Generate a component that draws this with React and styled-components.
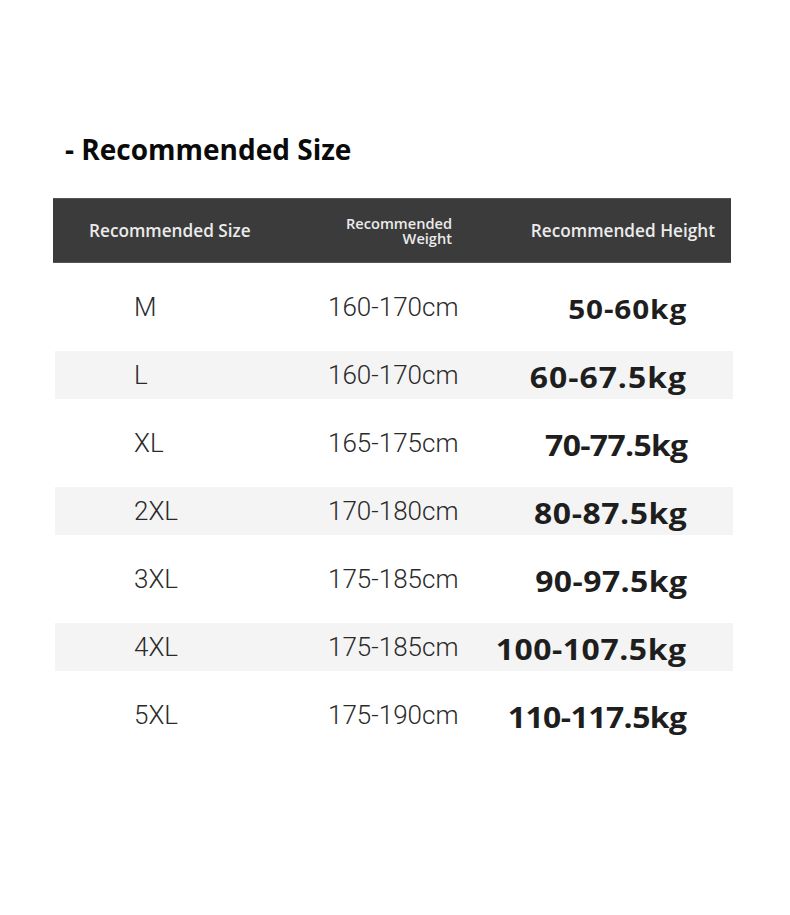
import React from "react";
import styled, { createGlobalStyle } from "styled-components";

const GlobalStyle = createGlobalStyle`
  body {
    margin: 0;
    background: #ffffff;
    font-family: "Open Sans", "Noto Sans", sans-serif;
  }
`;

// the figures in the picture are set in a broad bold face: widen Open Sans a little
// and nudge the spacing per row so each keeps its width
const rows = [
  { size: "M", height: "160-170cm", weight: "50-60kg", fs: 27, ls: 0.8 },
  { size: "L", height: "160-170cm", weight: "60-67.5kg", fs: 29, ls: 0.9 },
  { size: "XL", height: "165-175cm", weight: "70-77.5kg", fs: 29, ls: -0.6 },
  { size: "2XL", height: "170-180cm", weight: "80-87.5kg", fs: 29, ls: 0.5 },
  { size: "3XL", height: "175-185cm", weight: "90-97.5kg", fs: 29, ls: 0.4 },
  { size: "4XL", height: "175-185cm", weight: "100-107.5kg", fs: 29, ls: 0.5 },
  { size: "5XL", height: "175-190cm", weight: "110-117.5kg", fs: 29, ls: -0.5 },
];

const App = () => {
  return (
    <Page>
      <GlobalStyle />
      <Title>- Recommended Size</Title>
      <Table>
        <Header>
          <HeadCell>Recommended Size</HeadCell>
          <HeadCellSmall>
            Recommended
            <br />
            Weight
          </HeadCellSmall>
          <HeadCellRight>Recommended Height</HeadCellRight>
        </Header>
        <Body>
          {rows.map((row, i) => (
            <Row key={row.size} $striped={i % 2 === 1}>
              <SizeCell>{row.size}</SizeCell>
              <HeightCell>{row.height}</HeightCell>
              <WeightCell>
                <Figure $fs={row.fs} $ls={row.ls}>
                  {row.weight}
                </Figure>
              </WeightCell>
            </Row>
          ))}
        </Body>
      </Table>
    </Page>
  );
};

export default App;

const Page = styled.div`
  width: 790px;
  min-height: 915px;
  padding-top: 129px;
  box-sizing: border-box;
`;

const Title = styled.h1`
  margin: 0 0 29px 65px;
  font-family: "Open Sans", sans-serif;
  font-weight: 700;
  font-size: 28px;
  line-height: 40px;
  color: #0a0a0a;
`;

const Table = styled.div`
  margin-left: 53px;
  width: 680px;
`;

const Header = styled.div`
  display: flex;
  align-items: center;
  width: 678px;
  height: 65px;
  background: #3b3b3b;
  border-top: 1px solid #555;
  border-bottom: 1px solid #555;
  box-sizing: border-box;
  color: #ebebeb;
  font-weight: 600;
`;

const HeadCell = styled.div`
  width: 275px;
  flex-shrink: 0;
  padding-left: 36px;
  box-sizing: border-box;
  font-size: 17.2px;
`;

const HeadCellSmall = styled.div`
  width: 124px;
  flex-shrink: 0;
  text-align: right;
  font-size: 14.6px;
  line-height: 15px;
  margin-top: 1px;
`;

const HeadCellRight = styled.div`
  flex: 1;
  padding-right: 16px;
  text-align: right;
  font-size: 17.2px;
  white-space: nowrap;
`;

const Body = styled.div`
  display: flex;
  flex-direction: column;
  gap: 20px;
  padding-top: 20px;
`;

const Row = styled.div`
  display: flex;
  align-items: center;
  height: 48px;
  margin-left: 2px;
  background: ${(p) => (p.$striped ? "#f4f4f4" : "transparent")};
`;

const SizeCell = styled.div`
  width: 273px;
  flex-shrink: 0;
  padding-left: 79px;
  box-sizing: border-box;
  font-family: Roboto, "Noto Sans", sans-serif;
  font-weight: 300;
  font-size: 26px;
  color: #2a2a2a;
`;

const HeightCell = styled.div`
  width: 180px;
  flex-shrink: 0;
  font-family: Roboto, "Noto Sans", sans-serif;
  font-weight: 300;
  font-size: 26px;
  color: #2a2a2a;
`;

const WeightCell = styled.div`
  flex: 1;
  padding-right: 46px;
  text-align: right;
  white-space: nowrap;
`;

const Figure = styled.span`
  display: inline-block;
  margin-top: 2px;
  font-family: "Open Sans", sans-serif;
  font-weight: 700;
  font-size: ${(p) => p.$fs}px;
  letter-spacing: ${(p) => p.$ls}px;
  transform: scaleX(1.1);
  transform-origin: right center;
  color: #1e1e1e;
`;
